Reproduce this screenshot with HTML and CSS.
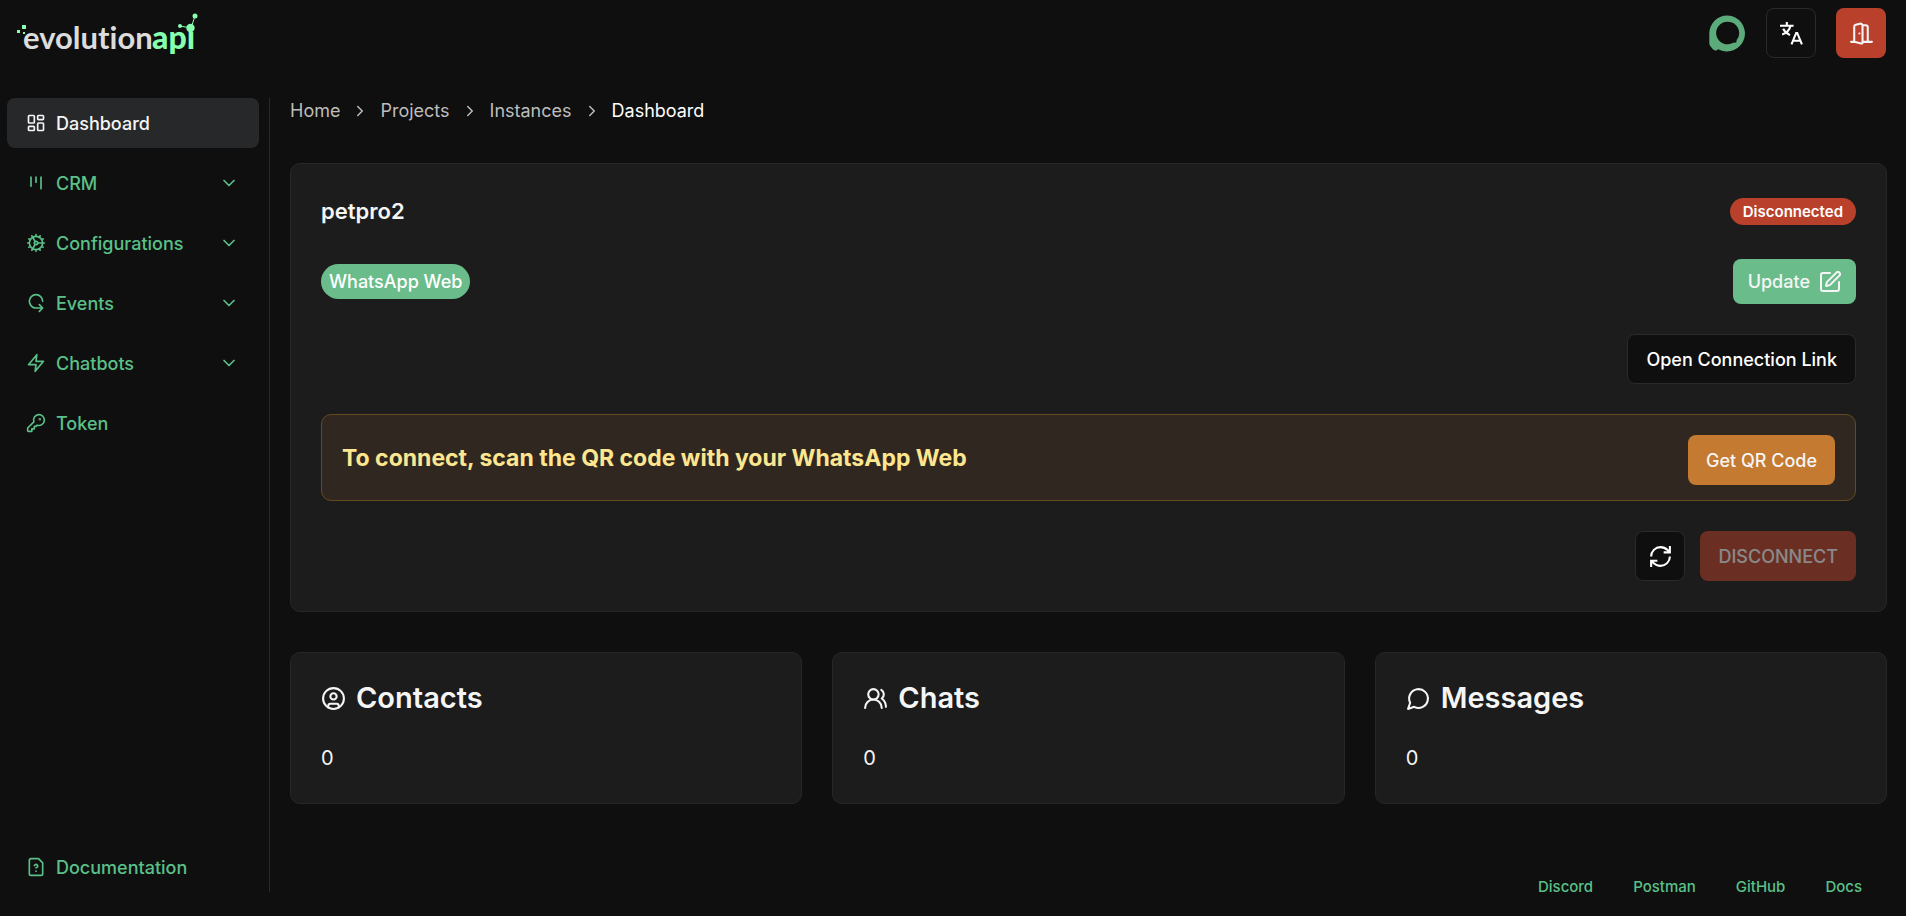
FILE: index.html
```html
<!DOCTYPE html>
<html lang="en">
<head>
<meta charset="utf-8">
<meta name="viewport" content="width=device-width, initial-scale=1">
<title>Evolution API - Dashboard</title>
<link rel="stylesheet" href="styles.css">
</head>
<body>
<header class="topbar">
  <a class="brand" href="#" aria-label="evolutionapi">
    <svg class="logo" viewBox="0 0 184 44" role="img" aria-hidden="true">
      <g class="logo-green">
        <rect x="0" y="17" width="3" height="3"/><rect x="5" y="12" width="4" height="4"/><rect x="6" y="19" width="2" height="2"/>
        <path d="M163 13l11 2 4-12" fill="none" stroke="#86ffae" stroke-width="1"/>
        <circle cx="163" cy="13" r="2"/><circle cx="173.500" cy="15" r="4.200"/><circle cx="178" cy="3" r="2.500"/>
      </g>
      <text class="logo-text" x="6" y="36">evolution</text>
      <text class="logo-text logo-api" x="135" y="36">apı</text>
    </svg>
  </a>
  <div class="topbar-actions">
    <svg class="avatar" viewBox="0 0 36 36" aria-hidden="true">
      <path fill-rule="evenodd" fill="#5cab7a" d="M18 0.500a17.500 17.500 0 1 1-9 32.800l-2.500 1.400-2.500-1.200-3-3.500-.700-2V17.500A17.500 17.500 0 0 1 18 .500ZM18 6.500a11 11 0 1 0 5.500 20.500l3-.3.5-2.500a11 11 0 0 0-9-17.700Z"/>
    </svg>
    <button class="btn btn-outline btn-icon" type="button" aria-label="Language">
      <svg class="icon-lg" viewBox="0 0 24 24" fill="none" stroke="currentColor" stroke-width="2"><path d="M7.500 1v3M1 4.500h13M3 13c4-1 7.500-4.500 8-8.500M4 7.500c1.200 2.500 3.500 4.500 6.500 6M12 22.500l4.500-11h1l4.500 11M13.500 19h7"/></svg>
    </button>
    <button class="btn btn-danger btn-icon" type="button" aria-label="Log out">
      <svg class="icon-lg stroke" viewBox="0 0 24 24"><path d="M13 4h3a2 2 0 0 1 2 2v14M2 20h3M13 20h9M10 12v.01M13 4.562v16.157a1 1 0 0 1-1.242.97L5 20V5.562a2 2 0 0 1 1.515-1.940l4-1A2 2 0 0 1 13 4.561Z"/></svg>
    </button>
  </div>
</header>
<div class="shell">
  <nav class="sidebar" aria-label="Instance">
    <ul class="menu">
      <li><a class="menu-item active" href="#"><svg class="icon stroke" viewBox="0 0 24 24"><rect x="3" y="3" width="7" height="9" rx="1"/><rect x="14" y="3" width="7" height="5" rx="1"/><rect x="14" y="12" width="7" height="9" rx="1"/><rect x="3" y="16" width="7" height="5" rx="1"/></svg><span>Dashboard</span></a></li>
      <li><button class="menu-item" type="button"><svg class="icon stroke" viewBox="0 0 24 24"><path d="M6 5v11M12 5v6M18 5v14"/></svg><span>CRM</span><svg class="icon stroke chevron" viewBox="0 0 24 24"><path d="m6 9 6 6 6-6"/></svg></button></li>
      <li><button class="menu-item" type="button"><svg class="icon stroke" viewBox="0 0 24 24"><path d="M12 20a8 8 0 1 0 0-16 8 8 0 0 0 0 16ZM12 14a2 2 0 1 0 0-4 2 2 0 0 0 0 4ZM12 2v2M12 22v-2M17 20.660l-1-1.730M11 10.270 7 3.340M20.660 17l-1.730-1M3.340 7l1.730 1M14 12h8M2 12h2M20.660 7l-1.730 1M3.340 17l1.730-1M17 3.340l-1 1.730M11 13.730l-4 6.930"/></svg><span>Configurations</span><svg class="icon stroke chevron" viewBox="0 0 24 24"><path d="m6 9 6 6 6-6"/></svg></button></li>
      <li><button class="menu-item" type="button"><svg class="icon stroke" viewBox="0 0 24 24"><path d="M20 10c0-4.400-3.600-8-8-8s-8 3.600-8 8 3.600 8 8 8h8M16 14l4 4-4 4"/></svg><span>Events</span><svg class="icon stroke chevron" viewBox="0 0 24 24"><path d="m6 9 6 6 6-6"/></svg></button></li>
      <li><button class="menu-item" type="button"><svg class="icon stroke" viewBox="0 0 24 24"><path d="M13 2 3 14h9l-1 8 10-12h-9l1-8Z"/></svg><span>Chatbots</span><svg class="icon stroke chevron" viewBox="0 0 24 24"><path d="m6 9 6 6 6-6"/></svg></button></li>
      <li><a class="menu-item" href="#"><svg class="icon stroke" viewBox="0 0 24 24"><path d="M2 18v3c0 .6.4 1 1 1h4v-3h3v-3h2l1.400-1.400a6.500 6.500 0 1 0-4-4Z"/><circle cx="16.500" cy="7.500" r=".5"/></svg><span>Token</span></a></li>
      <li class="menu-end"><a class="menu-item" href="#"><svg class="icon stroke" viewBox="0 0 24 24"><path d="M15 2H6a2 2 0 0 0-2 2v16a2 2 0 0 0 2 2h12a2 2 0 0 0 2-2V7ZM10 10.300c.2-.4.5-.8.9-1a2.100 2.100 0 0 1 2.600.4c.3.4.5.8.5 1.300 0 1.300-2 2-2 2M12 17h.01"/></svg><span>Documentation</span></a></li>
    </ul>
  </nav>
  <div class="content">
    <main class="main">
      <nav class="breadcrumb" aria-label="Breadcrumb">
        <a href="#">Home</a><svg class="icon-sm stroke" viewBox="0 0 24 24"><path d="m9 18 6-6-6-6"/></svg>
        <a href="#">Projects</a><svg class="icon-sm stroke" viewBox="0 0 24 24"><path d="m9 18 6-6-6-6"/></svg>
        <a href="#">Instances</a><svg class="icon-sm stroke" viewBox="0 0 24 24"><path d="m9 18 6-6-6-6"/></svg>
        <span class="current" aria-current="page">Dashboard</span>
      </nav>
      <section class="card instance">
        <div class="row"><h1 class="instance-name">petpro2</h1><span class="badge badge-danger">Disconnected</span></div>
        <div class="row"><span class="badge badge-channel">WhatsApp Web</span>
          <button class="btn btn-primary" type="button">Update <svg class="icon-edit stroke" viewBox="2 1 21 21"><path d="M12 3H5a2 2 0 0 0-2 2v14a2 2 0 0 0 2 2h14a2 2 0 0 0 2-2v-7M18.375 2.625a1 1 0 0 1 3 3l-9.013 9.014a2 2 0 0 1-.853.505l-2.873.84a.5.5 0 0 1-.62-.62l.84-2.873a2 2 0 0 1 .506-.852z"/></svg></button></div>
        <div class="row row-end"><button class="btn btn-outline" type="button">Open Connection Link</button></div>
        <div class="alert" role="alert"><h2 class="alert-title">To connect, scan the QR code with your WhatsApp Web</h2><button class="btn btn-warning" type="button">Get QR Code</button></div>
        <div class="row row-end">
          <button class="btn btn-outline btn-icon" type="button" aria-label="Refresh"><svg class="icon-lg stroke sharp" viewBox="0 0 24 24"><path d="M3 12a9 9 0 0 1 9-9 9.750 9.750 0 0 1 6.740 2.740L21 8M21 2v6h-6M21 12a9 9 0 0 1-9 9 9.750 9.750 0 0 1-6.740-2.740L3 16M9 16H3v6"/></svg></button>
          <button class="btn btn-danger" type="button" disabled>DISCONNECT</button>
        </div>
      </section>
      <section class="stats">
        <article class="card stat"><h2 class="stat-title"><svg class="icon-lg stroke" viewBox="0 0 24 24"><circle cx="12" cy="12" r="10"/><circle cx="12" cy="10" r="3"/><path d="M7 20.662V19a2 2 0 0 1 2-2h6a2 2 0 0 1 2 2v1.662"/></svg>Contacts</h2><p class="stat-value">0</p></article>
        <article class="card stat"><h2 class="stat-title"><svg class="icon-lg stroke" viewBox="0 0 24 24"><path d="M18 21a8 8 0 0 0-16 0"/><circle cx="10" cy="8" r="5"/><path d="M22 20c0-3.370-2-6.500-4-8a5 5 0 0 0-.45-8.300"/></svg>Chats</h2><p class="stat-value">0</p></article>
        <article class="card stat"><h2 class="stat-title"><svg class="icon-lg stroke" viewBox="0 0 24 24"><path d="M7.900 20A9 9 0 1 0 4 16.100L2 22Z"/></svg>Messages</h2><p class="stat-value">0</p></article>
      </section>
    </main>
    <footer class="footer"><a href="#">Discord</a><a href="#">Postman</a><a href="#">GitHub</a><a href="#">Docs</a></footer>
  </div>
</div>
</body>
</html>
```
FILE: styles.css
```css
* { box-sizing: border-box; }

body {
  margin: 0;
  min-height: 100vh;
  display: flex;
  flex-direction: column;
  background: #0f0f0f;
  color: #f5f5f5;
  font: 400 18px/25px Inter, "Liberation Sans", sans-serif;
}

h1, h2, p, ul { margin: 0; padding: 0; }
ul { list-style: none; }
a { color: inherit; text-decoration: none; }
button { font: inherit; color: inherit; border: 0; cursor: pointer; }
svg { flex: none; display: block; }

.stroke { fill: none; stroke: currentColor; stroke-width: 2; stroke-linecap: round; stroke-linejoin: round; }
.sharp { stroke-linecap: butt; stroke-linejoin: miter; }
.icon { width: 20px; height: 20px; }
.icon-sm { width: 18px; height: 18px; }
.icon-lg { width: 25px; height: 25px; }
.icon-edit { width: 21px; height: 21px; }

.topbar {
  display: flex;
  justify-content: space-between;
  align-items: flex-start;
  padding: 8px 20px 0 17px;
}
.brand { padding-top: 5px; }
.logo { width: 184px; height: 44px; overflow: visible; }
.logo-text { font: 700 31px Lato, sans-serif; font-variant-ligatures: none; fill: #dcdcdc; }
.logo-api { font-size: 32px; font-weight: 900; fill: #86ffae; }
.logo-green { fill: #86ffae; }
.topbar-actions { display: flex; align-items: center; gap: 20px; }
.avatar { width: 37px; height: 37px; }

.shell { flex: 1; display: flex; padding: 40px 19px 0 7px; }

.sidebar {
  display: flex;
  width: 263px;
  margin-bottom: 24px;
  padding-right: 10px;
  border-right: 1px solid #2a2a2a;
}
.menu { flex: 1; display: flex; flex-direction: column; gap: 10px; }
.menu-end { margin-top: auto; }
.menu-item {
  display: flex;
  align-items: center;
  gap: 10px;
  width: 100%;
  height: 50px;
  padding: 0 20px 0 19px;
  border-radius: 8px;
  background: transparent;
  color: #5ac088;
  font-weight: 500;
}
.menu-item.active { background: #27282a; color: #f5f5f5; }
.chevron { margin-left: auto; }

.content { flex: 1; min-width: 0; display: flex; flex-direction: column; padding-left: 20px; }
.breadcrumb { display: flex; align-items: center; gap: 11px; color: #bdbdbd; margin-bottom: 40px; }
.breadcrumb .current { color: #fff; }

.card { background: #1c1c1c; border: 1px solid #272727; border-radius: 10px; padding: 30px; }
.instance { display: flex; flex-direction: column; gap: 30px; }
.row { display: flex; align-items: center; justify-content: space-between; gap: 15px; }
.row-end { justify-content: flex-end; }
.instance-name { font-size: 22px; line-height: 35px; font-weight: 600; }

.badge { border-radius: 999px; font-weight: 600; color: #fff; }
.badge-danger { background: #b9402a; padding: 3px 13px; font-size: 15px; line-height: 21px; }
.badge-channel { background: #6abd8b; padding: 5px 8px; font-weight: 500; }

.btn {
  display: inline-flex;
  align-items: center;
  justify-content: center;
  min-height: 50px;
  padding: 0 18px;
  border-radius: 8px;
  font-weight: 500;
}
.btn-outline { background: #0f0f0f; border: 1px solid #2a2a2a; color: #fff; }
.btn-danger { background: #b9402a; }
.btn-primary { background: #6abd8b; min-height: 45px; padding: 0 15px; gap: 10px; }
.btn-warning { background: #c47a30; }
.btn-icon { width: 50px; padding: 0; }
.btn:disabled { opacity: .5; cursor: default; }

.alert {
  display: flex;
  align-items: center;
  justify-content: space-between;
  padding: 20px 20px 15px;
  border: 1px solid #664920;
  border-radius: 10px;
  background: #302820;
}
.alert-title { color: #fde690; font-size: 23px; line-height: 30px; font-weight: 700; padding-bottom: 4px; }

.stats { display: grid; grid-template-columns: repeat(3, 1fr); gap: 30px; margin-top: 40px; }
.stat { display: flex; flex-direction: column; gap: 30px; }
.stat-title { display: flex; align-items: center; gap: 10px; font-size: 29px; line-height: 30px; font-weight: 600; }
.stat-value { font-size: 20px; line-height: 30px; }

.footer {
  display: flex;
  justify-content: flex-end;
  gap: 40px;
  margin-top: auto;
  padding: 20px 25px 19px;
  color: #5ac088;
  font-size: 15px;
  line-height: 20px;
  font-weight: 500;
}
```
